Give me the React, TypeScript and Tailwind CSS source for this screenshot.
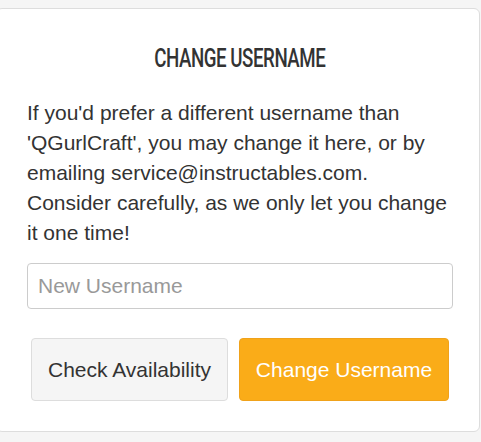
export default function App() {
  return (
    <div className="min-h-[442px] bg-[#f5f5f5] pt-2 overflow-hidden font-[family-name:'Liberation_Sans',Arial,sans-serif]">
      <div className="ml-[-4px] w-[484px] h-[424px] bg-white border border-[#dddddd] rounded-md pl-[30px] pr-[26px] pt-[33px]">
        <h2 className="text-center h-[32px] leading-[32px]">
          <span className="inline-block scale-x-[0.72] font-[family-name:Roboto,sans-serif] font-medium text-[26px] text-[#333333] tracking-tight">
            CHANGE USERNAME
          </span>
        </h2>
        <p className="mt-[24px] text-[21px] leading-[30px] text-[#333333]">
          If you'd prefer a different username than 'QGurlCraft', you may change it here, or by emailing service@instructables.com. Consider carefully, as we only let you change it one time!
        </p>
        <input
          type="text"
          placeholder="New Username"
          className="mt-[15px] block w-full h-[46px] border border-[#cccccc] rounded px-[10px] text-[21px] text-[#333333] placeholder:text-[#999999] outline-none"
        />
        <div className="mt-[29px] flex justify-center gap-[11px]">
          <button className="w-[197px] h-[63px] bg-[#f5f5f5] border border-[#dddddd] rounded text-[21px] text-[#333333]">
            Check Availability
          </button>
          <button className="w-[210px] h-[63px] bg-[#faac18] border border-[#f0a21a] rounded text-[21px] text-white">
            Change Username
          </button>
        </div>
      </div>
    </div>
  );
}
